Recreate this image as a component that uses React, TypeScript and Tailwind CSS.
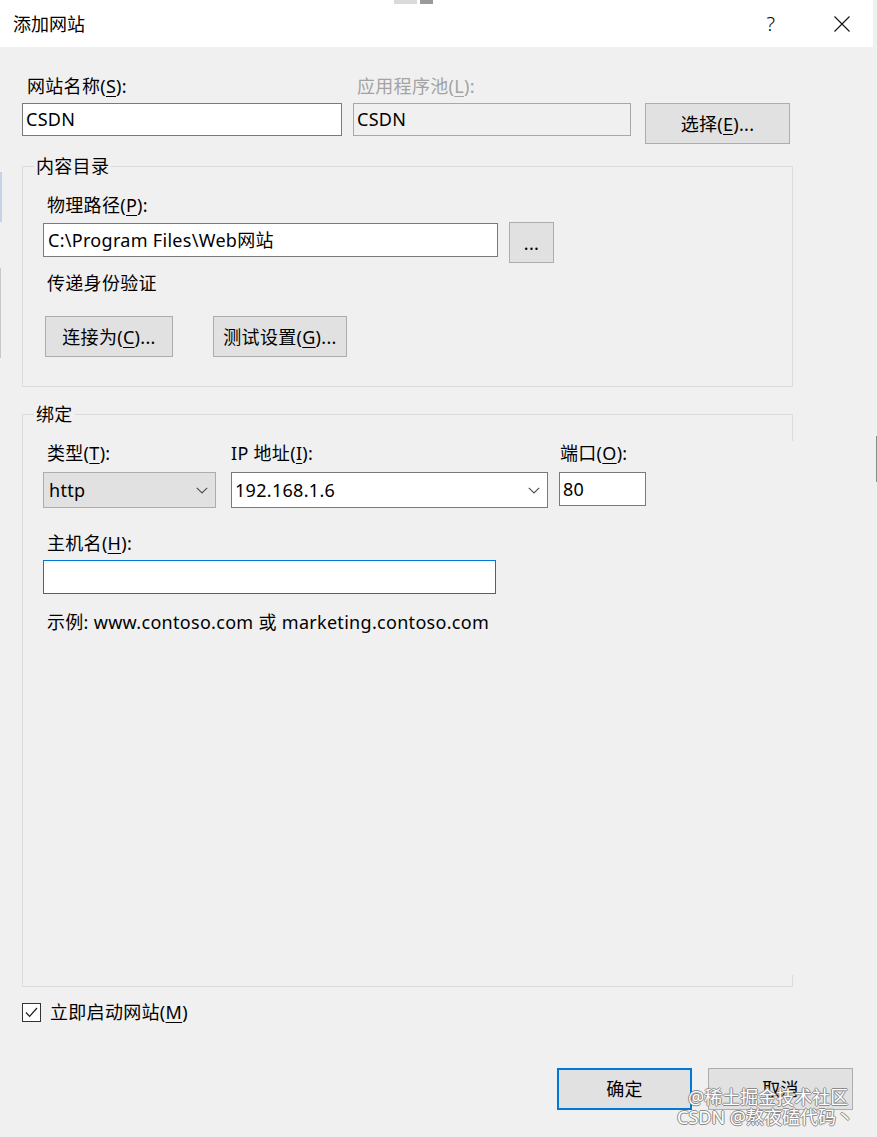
import React from 'react'

function U({ children }: { children: React.ReactNode }) {
  return <span className="underline underline-offset-[3px] decoration-1">{children}</span>
}

function Label({ children, className = '' }: { children: React.ReactNode; className?: string }) {
  return <div className={`h-[24px] leading-[24px] whitespace-nowrap ${className}`}>{children}</div>
}

function Btn({ children, className = '' }: { children: React.ReactNode; className?: string }) {
  return (
    <button className={`flex items-center justify-center bg-[#e1e1e1] border border-[#adadad] text-[18px] leading-[24px] text-black ${className}`}>
      {children}
    </button>
  )
}

function Chevron() {
  return (
    <svg width="12" height="7" viewBox="0 0 12 7" className="shrink-0">
      <path d="M0.8 0.8 6 6 11.2 0.8" fill="none" stroke="#505050" strokeWidth="1.2" />
    </svg>
  )
}

function Group({ title, className = '', children }: { title: string; className?: string; children: React.ReactNode }) {
  return (
    <div className={`relative w-[771px] border border-[#dcdcdc] pl-[20px] pt-[26px] ${className}`}>
      <div className="absolute left-[11px] -top-[13px] px-[2px] bg-[#f0f0f0] leading-[24px]">{title}</div>
      {children}
    </div>
  )
}

export default function App() {
  return (
    <div className="relative w-[877px] h-[1137px] overflow-hidden bg-[#f0f0f0] text-black text-[18px] tracking-[0.3px] font-['Noto_Sans','Noto_Sans_CJK_SC',sans-serif]">
      {/* title bar */}
      <div className="h-[47px] w-[873px] bg-white flex items-center pl-[13px]">
        <span className="leading-[24px] tracking-normal">添加网站</span>
        <div className="ml-auto flex items-center pr-[23px]">
          <span className="w-[14px] text-center text-[20px] leading-[24px] font-light">?</span>
          <svg width="16" height="16" viewBox="0 0 16 16" className="ml-[56px]">
            <path d="M0.5 0.5 15.5 15.5M15.5 0.5 0.5 15.5" stroke="#111" strokeWidth="1.1" fill="none" />
          </svg>
        </div>
      </div>

      {/* screenshot leftovers */}
      <div className="absolute left-[394px] top-0 w-[23px] h-[4px] bg-[#dadada]" />
      <div className="absolute left-[420px] top-0 w-[13px] h-[4px] bg-[#9a9a9a]" />
      <div className="absolute left-0 top-[172px] w-[2px] h-[50px] bg-[#c4d3e6]" />
      <div className="absolute left-0 top-[268px] w-[1px] h-[90px] bg-[#c8c8c8]" />
      <div className="absolute right-0 top-[436px] w-[1px] h-[46px] bg-[#8a8a8a]" />

      <div className="pl-[22px] pt-[27px]">
        {/* name / pool */}
        <div className="flex items-start">
          <div className="w-[320px]">
            <Label className="pl-[5px]">网站名称(<U>S</U>):</Label>
            <div className="mt-[5px] h-[33px] border border-[#7a7a7a] bg-white pl-[3px] leading-[31px]">CSDN</div>
          </div>
          <div className="ml-[11px] w-[278px]">
            <Label className="pl-[4px] text-[#a3a3a3]">应用程序池(<U>L</U>):</Label>
            <div className="mt-[5px] h-[33px] border border-[#a8a8a8] bg-[#f0f0f0] pl-[3px] leading-[31px]">CSDN</div>
          </div>
          <Btn className="ml-[14px] mt-[29px] w-[145px] h-[41px]">选择(<U>E</U>)...</Btn>
        </div>

        {/* content directory */}
        <Group title="内容目录" className="mt-[22px] h-[221px]">
          <Label className="pl-[4px]">物理路径(<U>P</U>):</Label>
          <div className="mt-[6px] flex items-start">
            <div className="w-[455px] h-[34px] border border-[#7a7a7a] bg-white pl-[4px] leading-[32px] whitespace-nowrap">C:\Program Files\Web网站</div>
            <Btn className="ml-[11px] -mt-px w-[45px] h-[41px] text-[15px]">...</Btn>
          </div>
          <Label className="mt-[8px] pl-[4px]">传递身份验证</Label>
          <div className="mt-[21px] ml-[2px] flex gap-[40px]">
            <Btn className="w-[128px] h-[41px]">连接为(<U>C</U>)...</Btn>
            <Btn className="w-[134px] h-[41px]">测试设置(<U>G</U>)...</Btn>
          </div>
        </Group>

        {/* bindings */}
        <Group title="绑定" className="mt-[27px] h-[573px] border-r-transparent">
          <div className="absolute -right-px -top-px w-px h-[27px] bg-[#dcdcdc]" />
          <div className="absolute -right-px -bottom-px w-px h-[12px] bg-[#dcdcdc]" />
          <div className="flex items-start">
            <div className="w-[173px]">
              <Label className="pl-[4px]">类型(<U>T</U>):</Label>
              <div className="mt-[7px] h-[36px] bg-[#e1e1e1] border border-[#adadad] flex items-center pl-[5px] pr-[7px]">
                <span className="flex-1 leading-[24px]">http</span>
                <Chevron />
              </div>
            </div>
            <div className="ml-[15px] w-[317px]">
              <Label>IP 地址(<U>I</U>):</Label>
              <div className="mt-[7px] h-[36px] bg-white border border-[#7a7a7a] flex items-center pl-[3px] pr-[7px]">
                <span className="flex-1 leading-[24px]">192.168.1.6</span>
                <Chevron />
              </div>
            </div>
            <div className="ml-[11px] w-[87px]">
              <Label className="pl-[1px]">端口(<U>O</U>):</Label>
              <div className="mt-[7px] h-[34px] bg-white border border-[#7a7a7a] pl-[3px] leading-[32px]">80</div>
            </div>
          </div>
          <Label className="mt-[23px] pl-[4px]">主机名(<U>H</U>):</Label>
          <div className="mt-[5px] w-[453px] h-[34px] bg-white border border-[#0078d7]" />
          <Label className="mt-[16px] pl-[4px]">示例: www.contoso.com 或 marketing.contoso.com</Label>
        </Group>

        {/* start now */}
        <div className="mt-[13px] h-[24px] flex items-center">
          <div className="w-[19px] h-[19px] border border-[#333] bg-white flex items-center justify-center">
            <svg width="13" height="11" viewBox="0 0 13 11">
              <path d="M1 5.5 4.6 9.4 12 1" fill="none" stroke="#222" strokeWidth="1.3" />
            </svg>
          </div>
          <span className="ml-[9px] leading-[24px]">立即启动网站(<U>M</U>)</span>
        </div>

        {/* dialog buttons */}
        <div className="mt-[44px] pr-[24px] flex justify-end gap-[16px]">
          <Btn className="w-[135px] h-[42px] !border-2 !border-[#0078d7]">确定</Btn>
          <Btn className="w-[145px] h-[42px]">取消</Btn>
        </div>
      </div>

      {/* watermark */}
      <div className="absolute left-[677px] top-[1087px] text-[18px] leading-[20px] tracking-normal text-white [text-shadow:1px_0_0_#8a8a8a,-1px_0_0_#8a8a8a,0_1px_0_#8a8a8a,0_-1px_0_#8a8a8a] whitespace-nowrap">
        <div className="ml-[11px]">@稀土掘金技术社区</div>
        <div>CSDN @熬夜磕代码丶</div>
      </div>
    </div>
  )
}
